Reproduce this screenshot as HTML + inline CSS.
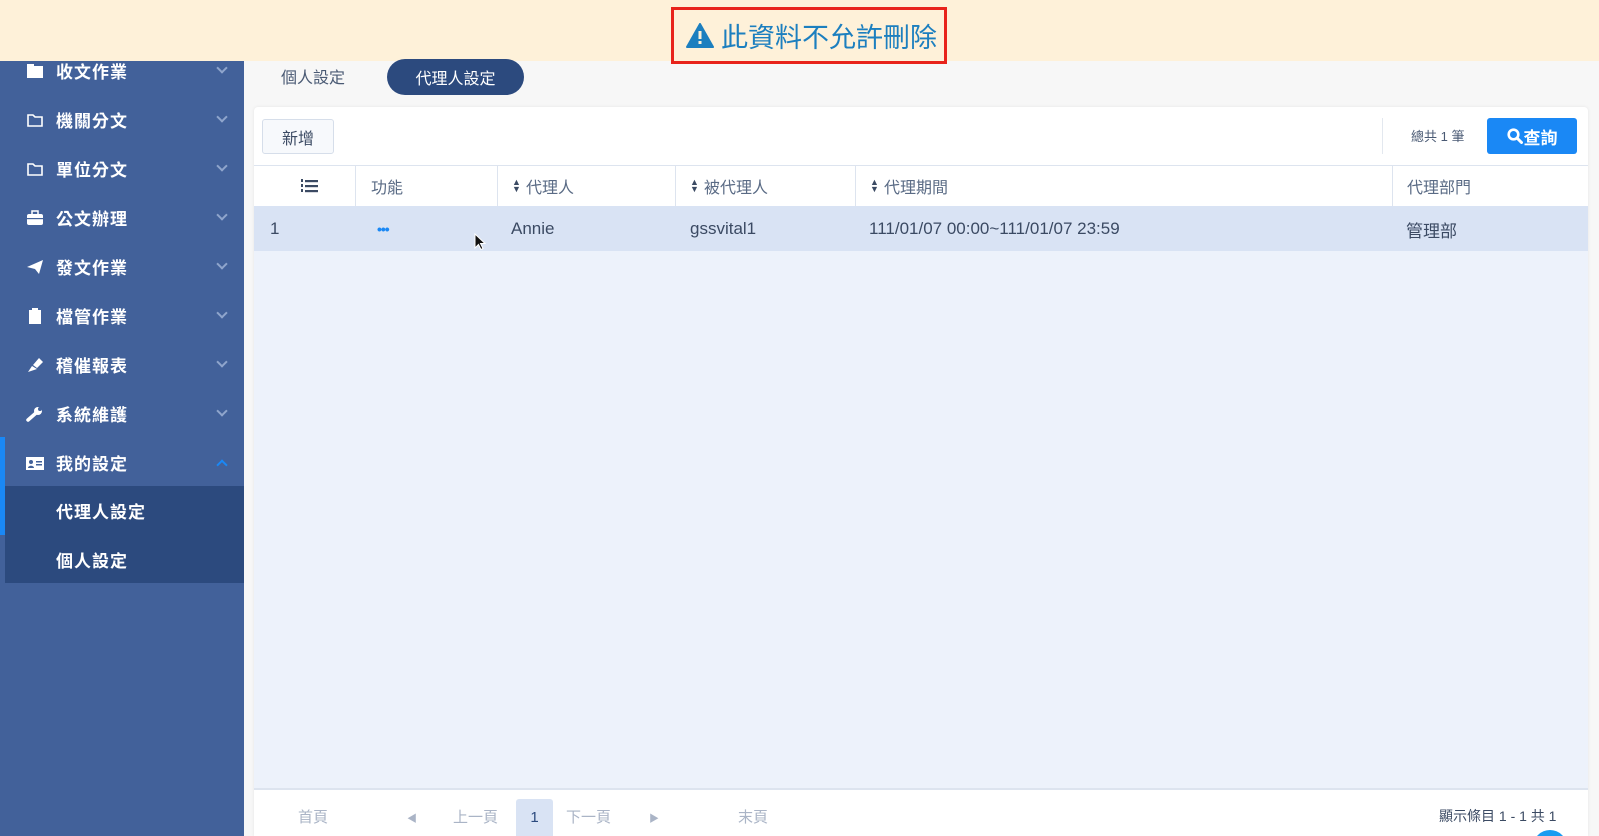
<!DOCTYPE html>
<html style="overflow:hidden;height:836px"><head><meta charset="utf-8"><style>
*{margin:0;padding:0;box-sizing:border-box}
html,body{overflow:hidden}
body{width:1599px;height:836px;overflow:hidden;background:#f7f7f7;font-family:"Liberation Sans","Noto Sans CJK TC",sans-serif;position:relative}
.ab{position:absolute}
.side{left:0;top:0;width:244px;height:836px;background:#42619a}
.item{position:absolute;left:0;width:244px;height:49px;color:#fff;font-size:17px;font-weight:bold;display:flex;align-items:center;padding-left:56px;letter-spacing:1px}
.item .ic{position:absolute;left:26px;top:50%;transform:translateY(-50%);width:18px;height:16px}
.item .ch{position:absolute;left:218px;top:50%;margin-top:-7px;width:8px;height:8px;border-right:2px solid #8fa5cc;border-bottom:2px solid #8fa5cc;transform:rotate(45deg)}
.banner{left:0;top:0;width:1599px;height:61px;background:#fef1d9}
.th{position:absolute;top:166px;height:40px;color:#5a6b85;font-size:16px;display:flex;align-items:center;border-left:1px solid #dde4ef}
.td{position:absolute;top:207px;height:44px;color:#3b4a63;font-size:17px;display:flex;align-items:center}
.sort{display:inline-block;width:8px;margin-right:6px;font-size:9px;line-height:7px;color:#3b4a63}
.pg{position:absolute;top:806px;font-size:15px;color:#aab4c6}
</style></head><body>
<div class="ab side"></div>
<div class="item" style="top:46px"><svg class="ic" viewBox="0 0 18 16"><rect x="1" y="3" width="16" height="12" fill="#fff"/><rect x="1" y="1" width="7" height="3" fill="#fff"/></svg>收文作業<span class="ch"></span></div>
<div class="item" style="top:95px"><svg class="ic" viewBox="0 0 18 16"><path d="M2 3h5l2 2h7v9H2z" fill="none" stroke="#fff" stroke-width="1.6"/></svg>機關分文<span class="ch"></span></div>
<div class="item" style="top:144px"><svg class="ic" viewBox="0 0 18 16"><path d="M2 3h5l2 2h7v9H2z" fill="none" stroke="#fff" stroke-width="1.6"/></svg>單位分文<span class="ch"></span></div>
<div class="item" style="top:193px"><svg class="ic" viewBox="0 0 18 16"><rect x="1" y="4" width="16" height="11" rx="2" fill="#fff"/><rect x="6" y="1" width="6" height="4" fill="none" stroke="#fff" stroke-width="1.5"/><rect x="1" y="8" width="16" height="1.2" fill="#42619a"/></svg>公文辦理<span class="ch"></span></div>
<div class="item" style="top:242px"><svg class="ic" viewBox="0 0 18 16"><path d="M1 8L17 1 13 15 9 10z" fill="#fff"/></svg>發文作業<span class="ch"></span></div>
<div class="item" style="top:291px"><svg class="ic" viewBox="0 0 18 16"><rect x="3" y="2" width="12" height="14" fill="#fff"/><rect x="6" y="0" width="6" height="3" fill="#fff"/></svg>檔管作業<span class="ch"></span></div>
<div class="item" style="top:340px"><svg class="ic" viewBox="0 0 18 16"><path d="M2 15l4-6 5 3zM7 8l6-7 4 4-6 6z" fill="#fff"/></svg>稽催報表<span class="ch"></span></div>
<div class="item" style="top:389px"><svg class="ic" viewBox="0 0 18 16"><path d="M2 14l8-7" stroke="#fff" stroke-width="3.5" stroke-linecap="round"/><circle cx="12" cy="5" r="4" fill="#fff"/><circle cx="14" cy="3" r="2" fill="#42619a"/></svg>系統維護<span class="ch"></span></div>
<div class="ab" style="left:0;top:437px;width:5px;height:98px;background:#1a88f5"></div>
<div class="item" style="top:438px"><svg class="ic" viewBox="0 0 18 16"><rect x="0" y="2" width="18" height="13" fill="#fff"/><circle cx="5" cy="7" r="2" fill="#42619a"/><path d="M2 13c0-3 6-3 6 0z" fill="#42619a"/><rect x="10" y="6" width="6" height="1.5" fill="#42619a"/><rect x="10" y="9" width="6" height="1.5" fill="#42619a"/></svg>我的設定<span class="ch" style="transform:rotate(225deg);margin-top:-2px;border-color:#1a88f5"></span></div>
<div class="ab" style="left:5px;top:486px;width:239px;height:97px;background:#2c4a7e"></div>
<div class="item" style="top:486px">代理人設定</div>
<div class="item" style="top:535px">個人設定</div>

<div class="ab banner"></div>
<div class="ab" style="left:671px;top:7px;width:276px;height:57px;border:3px solid #e8231b;display:flex;align-items:center;padding-left:12px;color:#1c7fbf;font-size:27px">
<svg width="28" height="25" viewBox="0 0 28 25" style="margin-right:7px"><path d="M14 1L27 24H1z" fill="#1c7fbf" stroke="#1c7fbf" stroke-linejoin="round" stroke-width="2"/><rect x="12.5" y="8" width="3" height="8" fill="#fef1d9"/><rect x="12.5" y="18" width="3" height="3" fill="#fef1d9"/></svg>此資料不允許刪除</div>

<div class="ab" style="left:281px;top:64px;font-size:16px;color:#4a5a74">個人設定</div>
<div class="ab" style="left:387px;top:59px;width:137px;height:36px;border-radius:18px;background:#2c4a7e;color:#fff;font-size:16px;display:flex;align-items:center;justify-content:center">代理人設定</div>

<div class="ab" style="left:254px;top:107px;width:1334px;height:729px;background:#fff;border-radius:4px 4px 0 0;box-shadow:0 0 3px rgba(0,0,0,.08)"></div>
<div class="ab" style="left:262px;top:119px;width:72px;height:35px;border:1px solid #d6deea;border-radius:3px;background:#f7f9fc;font-size:16px;color:#3b4a63;display:flex;align-items:center;justify-content:center">新增</div>
<div class="ab" style="left:1382px;top:118px;width:1px;height:36px;background:#e3e8ef"></div>
<div class="ab" style="left:1411px;top:126px;font-size:13px;color:#4a5a74">總共 1 筆</div>
<div class="ab" style="left:1487px;top:118px;width:90px;height:36px;background:#1a88f5;border-radius:3px;color:#fff;font-size:17px;font-weight:bold;display:flex;align-items:center;justify-content:center"><svg width="16" height="16" viewBox="0 0 16 16" style="margin-right:1px"><circle cx="6.5" cy="6.5" r="4.8" fill="none" stroke="#fff" stroke-width="2.6"/><path d="M10 10l4.5 4.5" stroke="#fff" stroke-width="3" stroke-linecap="round"/></svg>查詢</div>

<div class="ab" style="left:254px;top:165px;width:1334px;height:1px;background:#dde4ef"></div>
<div class="th" style="left:254px;width:101px;border-left:none;justify-content:center;padding-left:8px"><svg width="18" height="16" viewBox="0 0 18 16"><rect x="5" y="2" width="13" height="2.2" fill="#3b4a63"/><rect x="5" y="7" width="13" height="2.2" fill="#3b4a63"/><rect x="5" y="12" width="13" height="2.2" fill="#3b4a63"/><rect x="1" y="1" width="2" height="3" fill="#3b4a63"/><rect x="1" y="6" width="2" height="3" fill="#3b4a63"/><rect x="1" y="11" width="2" height="3" fill="#3b4a63"/></svg></div>
<div class="th" style="left:355px;width:142px;padding-left:15px">功能</div>
<div class="th" style="left:497px;width:178px;padding-left:14px"><span class="sort">▲<br>▼</span>代理人</div>
<div class="th" style="left:675px;width:180px;padding-left:14px"><span class="sort">▲<br>▼</span>被代理人</div>
<div class="th" style="left:855px;width:537px;padding-left:14px"><span class="sort">▲<br>▼</span>代理期間</div>
<div class="th" style="left:1392px;width:196px;padding-left:14px">代理部門</div>

<div class="ab" style="left:254px;top:206px;width:1334px;height:45px;background:#d9e3f4"></div>
<div class="ab" style="left:254px;top:251px;width:1334px;height:537px;background:#edf2fb"></div>
<div class="ab" style="left:254px;top:788px;width:1334px;height:2px;background:#dde4ef"></div>
<div class="td" style="left:270px">1</div>
<div class="td" style="left:377px;color:#1a88f5;font-weight:bold;font-size:14px;letter-spacing:-1px">•••</div>
<div class="td" style="left:511px">Annie</div>
<div class="td" style="left:690px">gssvital1</div>
<div class="td" style="left:869px">111/01/07 00:00~111/01/07 23:59</div>
<div class="td" style="left:1406px">管理部</div>
<svg class="ab" style="left:474px;top:233px" width="12" height="18" viewBox="0 0 12 18"><path d="M1 1v14l3.5-3.5 2.5 5 2-1-2.5-5H11z" fill="#111" stroke="#fff" stroke-width="1"/></svg>

<div class="pg" style="left:298px">首頁</div>
<div class="pg" style="left:407px;font-size:10px;top:810px">◀</div>
<div class="pg" style="left:453px">上一頁</div>
<div class="ab" style="left:516px;top:799px;width:37px;height:37px;background:#d9e3f4;border-radius:3px 3px 0 0;color:#2c4a7e;font-size:15px;display:flex;align-items:center;justify-content:center">1</div>
<div class="pg" style="left:566px">下一頁</div>
<div class="pg" style="left:649px;font-size:10px;top:810px">▶</div>
<div class="pg" style="left:738px">末頁</div>
<div class="pg" style="left:1439px;color:#3b4a63;font-size:14px">顯示條目 1 - 1 共 1</div>
<div class="ab" style="left:1533px;top:830px;width:34px;height:6px;overflow:hidden"><div style="width:34px;height:34px;border-radius:50%;background:#1a9cf0"></div></div>
</body></html>
